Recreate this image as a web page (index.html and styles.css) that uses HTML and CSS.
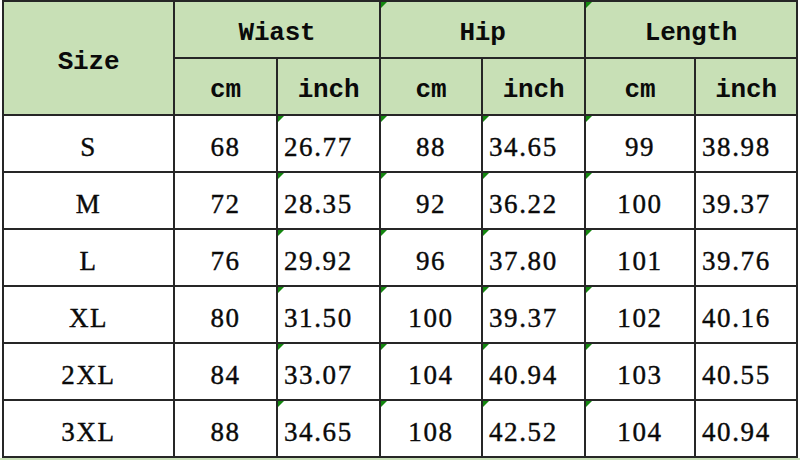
FILE: index.html
```html
<!DOCTYPE html>
<html>
<head>
<meta charset="utf-8">
<link rel="stylesheet" href="styles.css">
</head>
<body>
<table class="sizes">
  <colgroup>
    <col class="c-size"><col class="c-w"><col class="c-w"><col class="c-h1"><col class="c-w"><col class="c-l1"><col class="c-h1">
  </colgroup>
  <thead>
    <tr>
      <th rowspan="2" class="hd">Size</th>
      <th colspan="2" class="hd">Wiast</th>
      <th colspan="2" class="hd mark">Hip</th>
      <th colspan="2" class="hd mark">Length</th>
    </tr>
    <tr>
      <th class="hd">cm</th><th class="hd">inch</th>
      <th class="hd">cm</th><th class="hd">inch</th>
      <th class="hd">cm</th><th class="hd">inch</th>
    </tr>
  </thead>
  <tbody>
    <tr><td class="sz">S</td><td class="num">68</td><td class="inch mark">26.77</td><td class="num mark">88</td><td class="inch mark">34.65</td><td class="num mark">99</td><td class="inch">38.98</td></tr>
    <tr><td class="sz">M</td><td class="num">72</td><td class="inch mark">28.35</td><td class="num mark">92</td><td class="inch mark">36.22</td><td class="num mark">100</td><td class="inch">39.37</td></tr>
    <tr><td class="sz">L</td><td class="num">76</td><td class="inch mark">29.92</td><td class="num mark">96</td><td class="inch mark">37.80</td><td class="num mark">101</td><td class="inch">39.76</td></tr>
    <tr><td class="sz">XL</td><td class="num">80</td><td class="inch mark">31.50</td><td class="num mark">100</td><td class="inch mark">39.37</td><td class="num mark">102</td><td class="inch">40.16</td></tr>
    <tr><td class="sz">2XL</td><td class="num">84</td><td class="inch mark">33.07</td><td class="num mark">104</td><td class="inch mark">40.94</td><td class="num mark">103</td><td class="inch">40.55</td></tr>
    <tr><td class="sz">3XL</td><td class="num">88</td><td class="inch mark">34.65</td><td class="num mark">108</td><td class="inch mark">42.52</td><td class="num mark">104</td><td class="inch">40.94</td></tr>
  </tbody>
</table>
<div class="next-row"></div>
</body>
</html>
```

FILE: styles.css
```css
html, body {
  margin: 0;
  padding: 0;
  background: #ffffff;
  overflow: hidden;
}

.sizes {
  border-collapse: collapse;
  table-layout: fixed;
  width: 796px;
  margin: 0 0 0 2px;
  color: #0a0a0a;
}

.c-size { width: 171px; }
.c-w { width: 103px; }
.c-h1 { width: 102px; }
.c-l1 { width: 110px; }

.sizes th,
.sizes td {
  border: 2px solid #262626;
  height: 57px;
  padding: 7px 0 0 0;
  box-sizing: border-box;
  vertical-align: middle;
  position: relative;
}

.sizes th {
  background: #c8e0b6;
  font-family: "Liberation Mono", "DejaVu Sans Mono", monospace;
  font-size: 26px;
  font-weight: bold;
  letter-spacing: -0.2px;
  text-align: center;
}

.sizes td {
  font-family: "Liberation Serif", "DejaVu Serif", serif;
  font-size: 27px;
  letter-spacing: 1.6px;
  -webkit-text-stroke: 0.4px #0a0a0a;
}

.sizes td.sz,
.sizes td.num {
  text-align: center;
}

.sizes td.inch {
  text-align: left;
  padding-left: 6px;
}

.mark::before {
  content: "";
  position: absolute;
  top: 0;
  left: 0;
  width: 0;
  height: 0;
  border-top: 6px solid #13860f;
  border-right: 6px solid transparent;
}

.next-row {
  height: 4px;
  background: #c8e0b6;
}
```
